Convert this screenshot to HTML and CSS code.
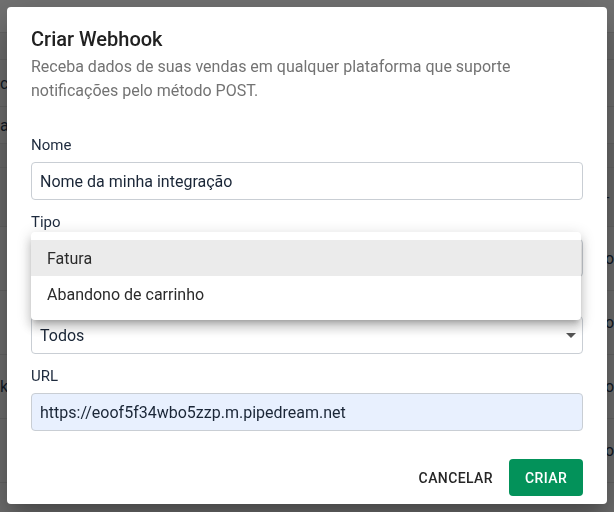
FILE: index.html
```html
<!DOCTYPE html>
<html lang="pt-BR">
<head>
<meta charset="utf-8">
<title>Criar Webhook</title>
<link rel="stylesheet" href="styles.css">
</head>
<body>
<div class="page">
  <div class="row row-top"><span class="l"></span><span class="r"></span></div>
  <div class="row row-a"><span class="l"></span><span class="r"></span></div>
  <div class="row row-b"><span class="l">c</span><span class="r"></span></div>
  <div class="row row-c"><span class="l">a</span><span class="r"></span></div>
  <div class="row row-d"><span class="l"></span><span class="r"></span></div>
  <div class="row row-e"><span class="l"></span><span class="r">-</span></div>
  <div class="row row-t"><span class="l"></span><span class="r">os</span></div>
  <div class="row row-t"><span class="l"></span><span class="r">os</span></div>
  <div class="row row-t"><span class="l">k</span><span class="r">os</span></div>
  <div class="row row-t"><span class="l"></span><span class="r">os</span></div>
</div>

<div class="overlay">
  <div class="dialog">
    <h2 class="title">Criar Webhook</h2>
    <p class="subtitle">Receba dados de suas vendas em qualquer plataforma que suporte notificações pelo método POST.</p>

    <div class="form">
      <div class="field">
        <label class="label">Nome</label>
        <div class="input">Nome da minha integração</div>
      </div>

      <div class="field">
        <label class="label">Tipo</label>
        <div class="select-wrap">
          <div class="input select"><span></span>
            <svg class="arrow" width="10" height="5" viewBox="0 0 10 5"><path d="M0 0h10L5 5z" fill="#555"/></svg>
          </div>
          <ul class="menu">
            <li class="item active">Fatura</li>
            <li class="item">Abandono de carrinho</li>
          </ul>
        </div>
      </div>

      <div class="field">
        <label class="label label-hidden" aria-label="Evento"></label>
        <div class="input select"><span>Todos</span>
          <svg class="arrow" width="10" height="5" viewBox="0 0 10 5"><path d="M0 0h10L5 5z" fill="#555"/></svg>
        </div>
      </div>

      <div class="field">
        <label class="label">URL</label>
        <div class="input autofill">https://eoof5f34wbo5zzp.m.pipedream.net</div>
      </div>
    </div>

    <div class="actions">
      <button class="btn btn-text">Cancelar</button>
      <button class="btn btn-primary">Criar</button>
    </div>
  </div>
</div>
</body>
</html>
```

FILE: styles.css
```css
* { box-sizing: border-box; }

html, body {
  margin: 0;
  padding: 0;
  width: 614px;
  height: 512px;
  overflow: hidden;
  font-family: Roboto, "Liberation Sans", sans-serif;
  background: #6e6e6e;
}

/* dimmed page behind the dialog */
.page {
  display: flex;
  flex-direction: column;
  background: #6e6e6e;
  color: #111a26;
  font-size: 16px;
}

.row {
  display: flex;
  justify-content: space-between;
  align-items: center;
  border-bottom: 1px solid #646464;
}

.row .l {
  width: 7px;
  overflow: hidden;
  text-align: right;
  white-space: nowrap;
}

.row .r {
  width: 9px;
  overflow: hidden;
  white-space: nowrap;
  text-align: left;
}

.row-top { height: 33px; background: #727272; }
.row-a { height: 27px; background: #6c6c6c; }
.row-b { height: 47px; }
.row-c { height: 37px; }
.row-d { height: 24px; background: #6a6a6a; }
.row-e { height: 59px; background: #6a6a6a; }
.row-t { height: 64px; }

.overlay {
  position: fixed;
  inset: 0;
  display: flex;
  justify-content: center;
  align-items: flex-start;
  padding-top: 7px;
}

.dialog {
  width: 600px;
  height: 497px;
  background: #fff;
  border-radius: 4px;
  padding: 16px 24px 8px;
  display: flex;
  flex-direction: column;
  box-shadow: 0 11px 15px -7px rgba(0,0,0,0.2), 0 24px 38px 3px rgba(0,0,0,0.14), 0 9px 46px 8px rgba(0,0,0,0.12);
}

.title {
  margin: 0;
  font-size: 20px;
  font-weight: 500;
  line-height: 32px;
  color: #212121;
}

.subtitle {
  margin: 0;
  font-size: 16px;
  line-height: 24px;
  color: #737373;
  padding-right: 40px;
}

.form {
  margin-top: 32px;
  display: flex;
  flex-direction: column;
}

.field {
  display: flex;
  flex-direction: column;
  margin-bottom: 12px;
}

.label {
  font-size: 15px;
  line-height: 20px;
  height: 20px;
  color: #1d2a3d;
  margin-bottom: 7px;
}

.input {
  height: 38px;
  border: 1px solid #c9ced4;
  border-radius: 4px;
  padding: 0 8px;
  font-size: 16px;
  color: #1a2637;
  display: flex;
  align-items: center;
  background: #fff;
}

.autofill {
  background: #e8f0fe;
}

.select {
  justify-content: space-between;
  padding-right: 6px;
}

.select-wrap {
  position: relative;
}

.menu {
  position: absolute;
  top: -7px;
  left: 0;
  right: 2px;
  margin: 0;
  padding: 8px 0;
  list-style: none;
  background: #fff;
  border-radius: 4px;
  box-shadow: 0 5px 5px -3px rgba(0,0,0,0.2), 0 8px 10px 1px rgba(0,0,0,0.14), 0 3px 14px 2px rgba(0,0,0,0.12);
  z-index: 2;
}

.item {
  height: 36px;
  padding: 0 16px;
  display: flex;
  align-items: center;
  font-size: 16px;
  color: #2b2b2b;
}

.item.active {
  background: #ebebeb;
}

.actions {
  margin-top: 16px;
  display: flex;
  justify-content: flex-end;
  gap: 8px;
}

.btn {
  height: 37px;
  border: none;
  border-radius: 4px;
  font-family: Roboto, "Liberation Sans", sans-serif;
  font-size: 14px;
  font-weight: 500;
  letter-spacing: 0.4px;
  text-transform: uppercase;
  cursor: pointer;
}

.btn-text {
  background: transparent;
  color: #262626;
  padding: 0 8px;
}

.btn-primary {
  background: #03925a;
  color: #fff;
  padding: 0 16px;
  width: 74px;
}
```
